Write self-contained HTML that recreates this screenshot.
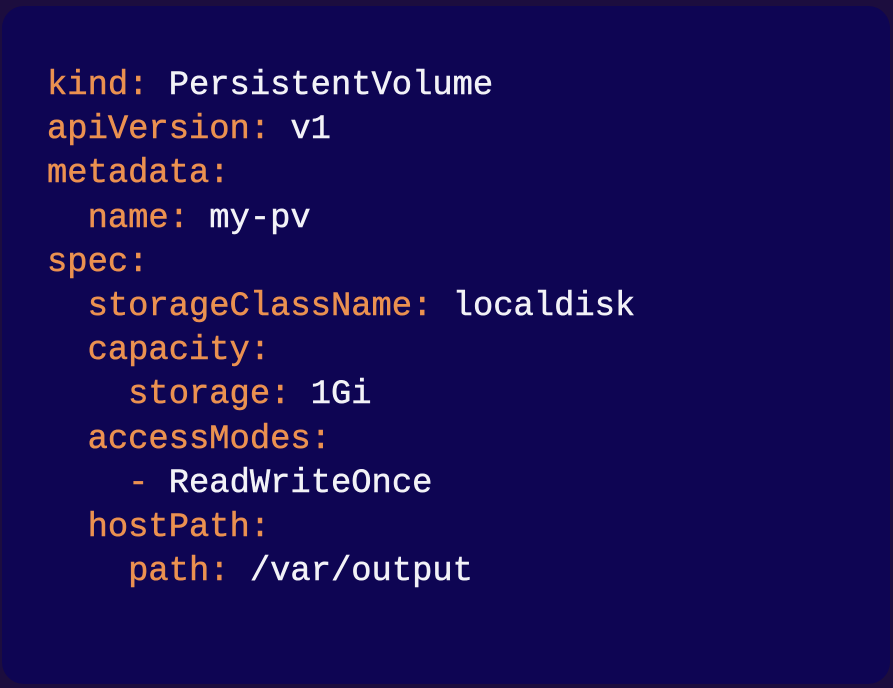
<!DOCTYPE html>
<html><head><style>
html,body{margin:0;padding:0;width:893px;height:688px;background:#1c0d3e;overflow:hidden}
.p{position:absolute;left:2px;top:6px;width:888px;height:678px;background:#0e0553;border-radius:22px}
pre{position:absolute;left:47px;top:64px;margin:0;font-family:"Liberation Mono",monospace;font-size:33.8px;line-height:44.2px;color:#f2f2f7;-webkit-text-stroke:0.5px currentColor}
.k{color:#eb9150}
</style></head><body>
<div class="p"></div>
<pre><span class="k">kind:</span> PersistentVolume
<span class="k">apiVersion:</span> v1
<span class="k">metadata:</span>
  <span class="k">name:</span> my-pv
<span class="k">spec:</span>
  <span class="k">storageClassName:</span> localdisk
  <span class="k">capacity:</span>
    <span class="k">storage:</span> 1Gi
  <span class="k">accessModes:</span>
    <span class="k">-</span> ReadWriteOnce
  <span class="k">hostPath:</span>
    <span class="k">path:</span> /var/output</pre>
</body></html>
